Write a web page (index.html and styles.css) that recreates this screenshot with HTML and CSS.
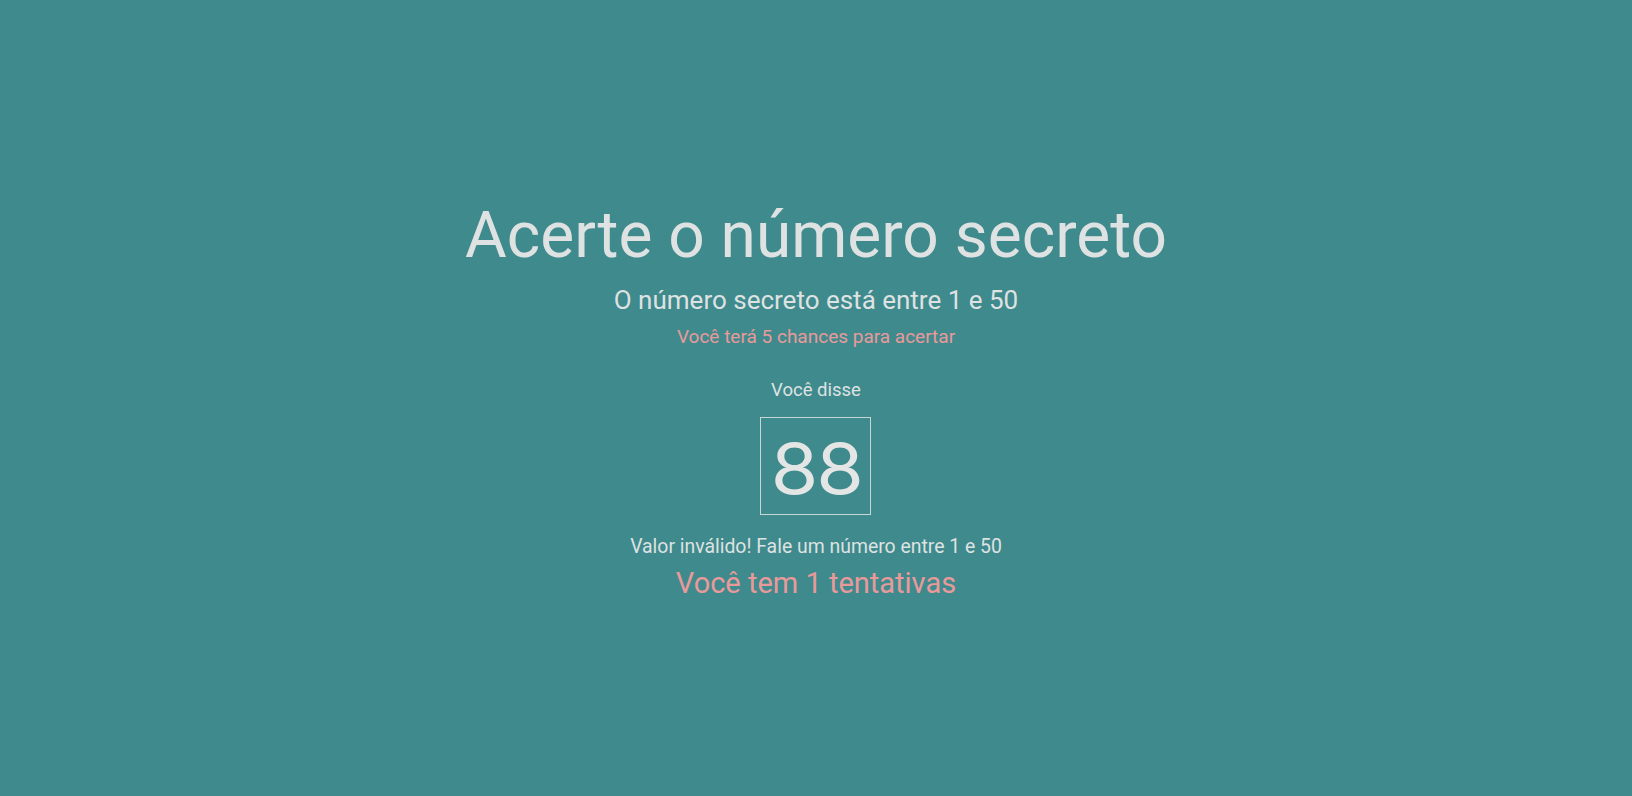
FILE: index.html
```html
<!DOCTYPE html>
<html lang="pt-BR">
<head>
<meta charset="utf-8">
<title>Número secreto</title>
<link rel="stylesheet" href="styles.css">
</head>
<body>
<main class="game">
  <h1 class="title">Acerte o número secreto</h1>
  <h3 class="range">O número secreto está entre <span>1</span> e <span>50</span></h3>
  <p class="chances">Você terá 5 chances para acertar</p>
  <div class="guess">
    <div class="said">Você disse</div>
    <div class="box"><span class="digits">88</span></div>
    <div class="invalid">Valor inválido! Fale um número entre 1 e 50</div>
  </div>
  <p class="tries">Você tem 1 tentativas</p>
</main>
</body>
</html>
```
FILE: styles.css
```css
* { box-sizing: border-box; }
html, body { height: 100%; }
body {
  margin: 0;
  background: #3e8a8c;
  color: #dfe2e2;
  font-family: Roboto, "Noto Sans", sans-serif;
}
.game {
  min-height: 100%;
  display: flex;
  flex-direction: column;
  align-items: center;
  justify-content: center;
  padding-top: 6px;
  text-align: center;
}
.title {
  margin: 0;
  font-size: 64px;
  font-weight: 400;
  line-height: 1;
}
.range {
  margin: 19px 0 0;
  font-size: 26px;
  font-weight: 400;
  line-height: 1;
}
.chances {
  margin: 14px 0 0;
  font-size: 19px;
  line-height: 1;
  color: #e89a9b;
}
.guess {
  display: flex;
  flex-direction: column;
  align-items: center;
  margin-top: 35px;
}
.said {
  font-size: 18.5px;
  line-height: 1;
}
.box {
  margin-top: 17px;
  width: 111px;
  height: 98px;
  padding-top: 6px;
  border: 1px solid #c9d6d6;
  display: flex;
  align-items: center;
  justify-content: center;
}
.digits {
  display: inline-block;
  font-family: Inter, sans-serif;
  font-size: 70px;
  font-weight: 380;
  line-height: 1;
  letter-spacing: -2px;
  color: #e4e6e6;
  transform: scaleX(1.1);
}
.invalid {
  margin-top: 22px;
  font-size: 19.4px;
  line-height: 1;
}
.tries {
  margin: 13px 0 0;
  font-size: 29px;
  line-height: 1;
  color: #e89a9b;
}
```
